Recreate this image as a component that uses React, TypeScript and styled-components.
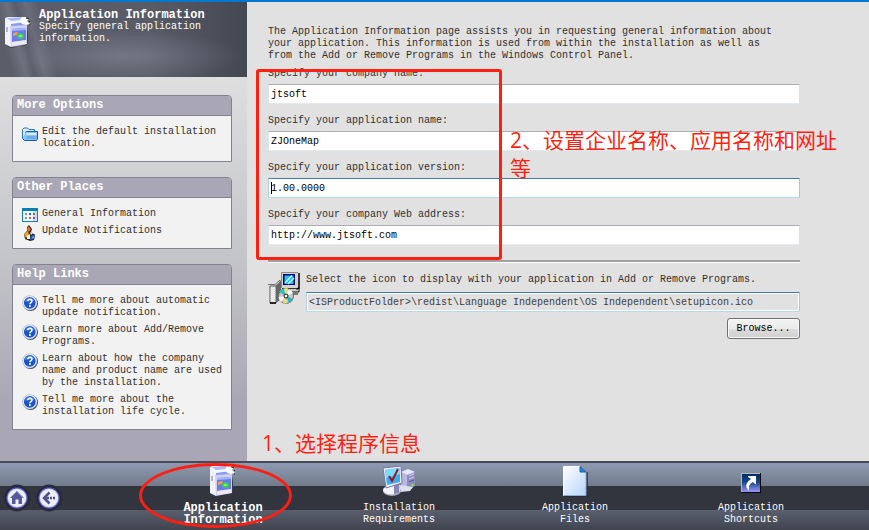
import React from "react";
import styled, { createGlobalStyle, css } from "styled-components";

const RED = "#ff1f12";

const GlobalStyle = createGlobalStyle`
  *, *::before, *::after { box-sizing: border-box; }
  body { margin: 0; background: #e1e1e1; }
  body, button, input {
    font-family: "Liberation Mono", "Noto Sans CJK SC", monospace;
    font-size: 10px;
    line-height: 12px;
  }
`;

const Page = styled.div`
  display: flex;
  flex-direction: column;
  min-height: 100vh;
  border-top: 2px solid #0078d0;
  color: #303030;
`;

const Columns = styled.div`
  display: flex;
  flex: 1;
`;

const Sidebar = styled.aside`
  flex: none;
  width: 247px;
  background: linear-gradient(#dededf 75px, #c4c5c9 255px, #a9a7b5 400px);
`;

const Banner = styled.header`
  display: flex;
  gap: 7px;
  height: 75px;
  padding: 7px 8px 0 4px;
  color: #fff;
  background:
    linear-gradient(75deg, transparent 5%, rgba(190, 196, 215, 0.18) 10%, transparent 13%, rgba(190, 196, 215, 0.16) 17%, transparent 22%),
    radial-gradient(ellipse 120px 26px at 50% 72%, rgba(150, 158, 178, 0.4), transparent),
    linear-gradient(90deg, #5b5d69, #595c67 60%, #444852);

  svg { flex: none; margin-top: 7px; }
`;

const BannerTitle = styled.h1`
  margin: 0;
  font-size: 12px;
  line-height: 12px;
`;

const BannerText = styled.p`
  margin: 0;
`;

const Panels = styled.div`
  display: grid;
  gap: 15px;
  padding: 18px 15px 31px 12px;
`;

const PanelBox = styled.section`
  border: 1px solid #84828f;
  border-radius: 4px 4px 0 0;
  background: #f2f2f2;
  overflow: hidden;
`;

const PanelTitle = styled.h2`
  margin: 0;
  padding: 0 4px;
  font-size: 12px;
  line-height: 19px;
  color: #fff;
  background: #a9a7b5;
  border-bottom: 1px solid #84828f;
`;

const PanelList = styled.ul`
  display: grid;
  gap: 5px;
  margin: 0;
  padding: 10px 6px 11px 9px;
  list-style: none;
`;

const PanelLink = styled.a`
  display: flex;
  gap: 4px;
  color: inherit;
  text-decoration: none;

  svg { flex: none; margin-bottom: -4px; }
`;

const Main = styled.main`
  position: relative;
  flex: 1;
  min-width: 0;
  padding: 24px 69px 40px 21px;
`;

const Intro = styled.p`
  max-width: 510px;
  margin: 0 0 6px;
`;

const Fields = styled.div`
  position: relative;
  display: grid;
  gap: 11px;
  padding-bottom: 15px;
`;

const Field = styled.div`
  position: relative;
  display: grid;
  gap: 4px;
`;

const TextBox = styled.input<{ $look?: "active" | "fixed" }>`
  width: 100%;
  min-width: 0;
  height: 20px;
  padding: 0 2px;
  color: #000;
  background: #fff;
  border: 1px solid;
  border-color: #abadb3 #dbdfe6 #e3e9ef #e2e3ea;
  border-radius: 1px;
  outline: none;

  ${(p) => p.$look && css`border-color: #3d7bad #a4c9e3 #b7d9ed #b5cfe7;`}
  ${(p) => p.$look === "fixed" && css`
    color: #404040;
    background: #e1e1e1;
    box-shadow: inset 0 0 0 1px #fff;
  `}
`;

const Caret = styled.span`
  position: absolute;
  left: 3px;
  bottom: 4px;
  width: 1px;
  height: 12px;
  background: #000;
`;

const Divider = styled.hr`
  height: 3px;
  margin: 0;
  border: 0;
  border-bottom: 1px solid #fff;
  background: #a0a0a0;
`;

const IconRow = styled.div`
  display: flex;
  gap: 6px;
  padding-top: 9px;

  > svg { flex: none; }
`;

const IconField = styled.div`
  display: grid;
  gap: 6px;
  flex: 1;
  min-width: 0;
  padding-top: 2px;
`;

const BrowseButton = styled.button`
  justify-self: end;
  width: 73px;
  height: 21px;
  padding: 0;
  color: #000;
  border: 1px solid #707070;
  border-radius: 3px;
  box-shadow: inset 0 0 0 1px #fbfbfb;
  background: linear-gradient(#f2f2f2, #ebebeb 50%, #dddddd 50%, #cfcfcf);
`;

const Note = styled.p`
  position: absolute;
  margin: 0;
  font-family: "Open Sans", "Noto Sans CJK SC", sans-serif;
  font-size: 21px;
  line-height: 28px;
  color: ${RED};
`;

const FieldsNote = styled(Note)`
  left: 242px;
  top: 58px;
  width: 332px;
`;

const StepNote = styled(Note)`
  left: 15px;
  bottom: 4px;
`;

const FieldsFrame = styled.div`
  position: absolute;
  left: -12px;
  top: 1px;
  width: 246px;
  bottom: 0;
  border: 3px solid ${RED};
  border-radius: 3px;
  pointer-events: none;
`;

const BottomBar = styled.footer`
  display: flex;
  padding: 4px 30px 4px 0;
  color: #fff;
  background: linear-gradient(
    #454b59 2px, #8f9bb3 2px, #717b8b 25px,
    #32353e 25px, #32353e 49px, #5a5f6e 49px, #3f444f 69px
  );
`;

const History = styled.div`
  display: flex;
  gap: 4px;
  flex: none;
  width: 135px;
  padding: 19px 0 0 3px;
`;

const RoundButton = styled.button`
  width: 28px;
  height: 28px;
  padding: 0;
  border: 0;
  background: none;

  svg { display: block; }
`;

const Tabs = styled.nav`
  display: grid;
  grid-template-columns: repeat(4, 1fr);
  flex: 1;
`;

const Tab = styled.button<{ $current?: boolean }>`
  position: relative;
  display: flex;
  flex-direction: column;
  align-items: center;
  gap: 5px;
  padding: 0;
  border: 0;
  background: none;
  color: #fff;
  ${(p) => p.$current && css`
    font-size: 12px;
    font-weight: bold;
  `}
`;

const TabLabel = styled.span`
  width: 80px;
`;

const TabRing = styled.span`
  position: absolute;
  left: calc(50% - 84px);
  top: -2px;
  width: 153px;
  height: 65px;
  border: 3px solid ${RED};
  border-radius: 50%;
`;

const ProductIcon = () => (
  <svg width="28" height="32" viewBox="0 0 28 32" aria-hidden="true">
    <path d="M2 30 7 32 22 29 24 27V11L21 30 7 31Z" fill="#3a3c52" />
    <path d="M1 2 7 8V31L1 28Z" fill="#f1f1f8" />
    <path d="M1 2 4 1H22V9L7 11Z" fill="#f4f5ff" />
    <path d="M3 2 19 1 17 4 7 5Z" fill="#a9b9f5" />
    <path d="M7 8 22 6V9L7 11Z" fill="#8499ee" />
    <path d="M6 10 23 9 23 28 7 31Z" fill="#d0d1f0" />
    <path d="M3 11V16" stroke="#77779a" strokeWidth="1" />
    <path d="M8 13 22 12V24L8 26Z" fill="#6b78ee" />
    <path d="M8 13 22 12V14L8 15Z" fill="#a5b4ff" />
    <path d="M9 17 14 16 13 19 9 20Z" fill="#f2a04a" />
    <ellipse cx="16.500" cy="20" rx="4" ry="3" fill="#3fbf69" />
    <ellipse cx="16.500" cy="20" rx="2" ry="1.300" fill="#7df06a" />
    <path d="M8 26 22 24V28L8 30Z" fill="#ebe8f1" />
    <path d="M16 4 18 1 21 3 25 3 23 5 26 8 22 9 18 8Z" fill="#fff" />
    <path d="M23 2 25 3M26 5 25 6M25 9H26" stroke="#22242f" strokeWidth="1" />
  </svg>
);

const FolderIcon = () => (
  <svg width="16" height="16" viewBox="0 0 16 16" aria-hidden="true">
    <path d="M.5 12.500V3.500L2 2H5.500L7 3.500H12.500V6" fill="#d8efff" stroke="#2473c4" />
    <path d="M3.500 6.500Q3.500 5.500 4.500 5.500H15.500V13L14.500 14.500H2.500L.5 12.500" fill="#8cc3f3" stroke="#1359b0" />
    <path d="M4.500 7H14.500V9.500H4.500Z" fill="#d3ebff" />
    <path d="M4.500 9.500H14.500V13H4.500Z" fill="#70aee9" />
  </svg>
);

const CalendarIcon = () => (
  <svg width="16" height="16" viewBox="0 0 16 16" shapeRendering="crispEdges" aria-hidden="true">
    <rect width="16" height="14" fill="#0880b0" />
    <rect x="1" y="3" width="14" height="10" fill="#f5f3ff" />
    <rect x="11" y="3" width="4" height="10" fill="#d9d4f4" />
    <path d="M3 5h2v2h-2zM3 9h2v2h-2z" fill="#8b8a94" />
    <path d="M7 5h2v2h-2z" fill="#087ba8" />
    <path d="M11 5h2v2h-2z" fill="#21a84d" />
    <path d="M7 9h2v2h-2z" fill="#ca6730" />
    <path d="M11 9h2v2h-2z" fill="#6661b7" />
  </svg>
);

const UpdateIcon = () => (
  <svg width="16" height="16" viewBox="0 0 16 16" aria-hidden="true">
    <path d="M7 0 10 4 9 7 13 10 12 15 8 16 3 14 2 9 5 6 5 2Z" fill="#22242e" />
    <path d="M6 1 9 4 7 7 5 5Z" fill="#ec6d1c" />
    <path d="M2 9 6 6 7 10 4 13Z" fill="#f6a51e" />
    <path d="M8 7 11 8 9 10Z" fill="#f7f7fa" />
    <path d="M5 11 8 9 8 14 5 14Z" fill="#fff" />
    <path d="M9 11 13 9 12 14 8 15Z" fill="#2b5caf" />
    <path d="M10 12 12 11 11 14Z" fill="#8db8ee" />
    <path d="M3 13 5 15 4 15Z" fill="#d6571e" />
  </svg>
);

const HelpIcon = () => (
  <svg width="16" height="16" viewBox="0 0 16 16" aria-hidden="true">
    <circle cx="8.500" cy="8.500" r="7.500" fill="#414560" />
    <circle cx="7.700" cy="7.700" r="7.500" fill="#b5bfd6" />
    <circle cx="7.800" cy="7.800" r="6.800" fill="#f0f4fb" />
    <circle cx="7.800" cy="7.800" r="5.900" fill="#1c55cb" />
    <path d="M3 7A5 5 0 0 1 12.500 6Q8 5 3 7Z" fill="#4f83e6" />
    <path d="M5.800 6.200Q5.900 4.300 7.900 4.300Q10 4.400 10 6.100Q9.900 7.200 8.700 7.800Q7.900 8.300 7.900 9.200" fill="none" stroke="#fff" strokeWidth="1.500" />
    <rect x="7" y="10.200" width="1.800" height="1.700" fill="#fff" />
  </svg>
);

const SetupIcon = () => (
  <svg width="32" height="32" viewBox="0 0 32 32" aria-hidden="true">
    <path d="M14 0H30V17H14Z" fill="#d6d4cc" />
    <path d="M13.500 16V.5H30" fill="none" stroke="#8a8a8a" />
    <path d="M31 1V16L29 17H14" fill="none" stroke="#000" strokeWidth="1.500" />
    <path d="M15 2H27V13H15Z" fill="#000080" />
    <path d="M16.500 3.500H25.500V12H16.500Z" fill="#25bdea" />
    <path d="M17 11 24 3.500M20 12 26 6" stroke="#b9f3ff" strokeWidth="1.500" />
    <path d="M17 17H28L31 20H20Z" fill="#c9c9c9" />
    <path d="M22 20H31V16M24 22H30" stroke="#111" strokeWidth="1" fill="none" />
    <path d="M0 12.500H7L12 8V13" fill="#e5e5e5" stroke="#6e6e6e" />
    <path d="M2 14H8V31H2Z" fill="#f4f4f4" stroke="#555" strokeWidth="1" />
    <path d="M3 17V30M5 15V30M7 17V30" stroke="#d0d0d0" strokeDasharray="1 1" />
    <path d="M8 13 13 9V27L8 31Z" fill="#676767" />
    <path d="M2 31H8" stroke="#000" strokeWidth="1.500" />
    <circle cx="18" cy="24" r="7.500" fill="#c8c8c8" stroke="#6b6b6b" />
    <path d="M18 24 11 20A8 8 0 0 1 16 16.500Z" fill="#32bfc2" />
    <path d="M18 24 16 16.500A8 8 0 0 1 20 16.500Z" fill="#eee66d" />
    <path d="M18 24 21 17A8 8 0 0 1 25 21Z" fill="#f7f7f7" />
    <path d="M18 24 25 27A8 8 0 0 1 21 31Z" fill="#29b5bd" />
    <path d="M18 24 19 31.500A8 8 0 0 1 15 31Z" fill="#e9de68" />
    <path d="M18 24 13 30A8 8 0 0 1 10.500 25Z" fill="#f5f5f5" />
    <circle cx="18" cy="24" r="2" fill="#fff" stroke="#111" />
  </svg>
);

const RequirementsIcon = () => (
  <svg width="34" height="32" viewBox="0 0 34 32" aria-hidden="true">
    <path d="M19 7 26 4 33 7V21L26 25 19 21Z" fill="#8e8cc0" />
    <path d="M19 7 26 4 33 7 25 10Z" fill="#e8e7fa" />
    <path d="M19 7 25 10V25L19 22Z" fill="#b9b8e2" />
    <path d="M27 11 32 9M27 14 32 12" stroke="#d9d8f4" />
    <path d="M27 17 32 15" stroke="#56548a" />
    <circle cx="30.500" cy="20" r="1.200" fill="#77ed35" />
    <path d="M12 19 18 18V26L12 27Z" fill="#9391c6" />
    <path d="M17 20 31 22 28 26 18 27Z" fill="#dedff0" />
    <ellipse cx="10" cy="26" rx="9" ry="5" fill="#a5a5bd" />
    <ellipse cx="9.500" cy="25" rx="8.500" ry="4.500" fill="#f4f4fb" />
    <path d="M12 20 17 19V28L12 29Z" fill="#8785b9" />
    <path d="M1 3 19 1 20 18 4 23Z" fill="#ececff" stroke="#7775a9" />
    <path d="M3 5 18 3V17L5 20Z" fill="#35aef2" />
    <path d="M3 5 18 3V9L4 13Z" fill="#79ddff" />
    <path d="M7 11 10 16 16 4" fill="none" stroke="#9e1824" strokeWidth="2" />
  </svg>
);

const FilesIcon = () => (
  <svg width="26" height="32" viewBox="0 0 26 32" aria-hidden="true">
    <defs>
      <linearGradient id="sheet" x1="0" y1="0" x2="1" y2="1">
        <stop offset="0" stopColor="#fff" />
        <stop offset="0.350" stopColor="#e4f0ff" />
        <stop offset="1" stopColor="#b9d5fa" />
      </linearGradient>
    </defs>
    <path d="M2 31.500H25V7" fill="none" stroke="#252b3a" strokeWidth="1.500" />
    <path d="M1.500 1.500H18.500L24 7V30.500H1.500Z" fill="url(#sheet)" stroke="#8ba9d9" />
    <path d="M1.500 30.500V1.500H18" fill="none" stroke="#fff" />
    <path d="M18 1.500 24 7H18Z" fill="#1689dc" stroke="#255c9c" />
  </svg>
);

const ShortcutIcon = () => (
  <svg width="20" height="32" viewBox="0 0 20 32" aria-hidden="true">
    <defs>
      <linearGradient id="dusk" x1="0" y1="0" x2="0" y2="1">
        <stop offset="0" stopColor="#002c60" />
        <stop offset="0.450" stopColor="#1a4587" />
        <stop offset="1" stopColor="#9c98ff" />
      </linearGradient>
    </defs>
    <rect y="8" width="20" height="20" fill="#05070c" />
    <rect y="8" width="19" height="19" fill="#b8b8b8" />
    <rect x="1" y="9" width="18" height="18" fill="url(#dusk)" />
    <path d="M7 11H15V19H14L12 17Q9 18 8 21V25H7Q4 21 6 18 7 16 10 14L7 12Z" fill="#fff" />
  </svg>
);

const Disc = ({ children }: { children: React.ReactNode }) => (
  <svg width="28" height="28" viewBox="0 0 28 28" aria-hidden="true">
    <circle cx="14" cy="14" r="13.500" fill="#2d3039" />
    <circle cx="14" cy="14" r="11.500" fill="#0d0f20" />
    <circle cx="14" cy="14" r="11" fill="#4547a0" />
    <circle cx="14" cy="14" r="9.800" fill="#a9aae0" />
    <circle cx="14" cy="14" r="9" fill="#eeeef3" />
    {children}
  </svg>
);

const HomeGlyph = () => (
  <>
    <path d="M14 7 21 14H19V20H15.500V15.500H12.500V20H9V14H7Z" fill="#55589c" />
    <path d="M14 8 20 14" stroke="#8386c2" />
  </>
);

const BackGlyph = () => (
  <>
    <path d="M14.500 8.500 9 14 14.500 19.500" fill="none" stroke="#4c4f8c" strokeWidth="2.500" />
    <path d="M11 14H14M15 14H17M18 14H20" stroke="#4c4f8c" strokeWidth="2.500" />
  </>
);

const panels = [
  { title: "More Options", links: [["Edit the default installation location.", FolderIcon]] },
  {
    title: "Other Places",
    links: [["General Information", CalendarIcon], ["Update Notifications", UpdateIcon]],
  },
  {
    title: "Help Links",
    links: [
      ["Tell me more about automatic update notification.", HelpIcon],
      ["Learn more about Add/Remove Programs.", HelpIcon],
      ["Learn about how the company name and product name are used by the installation.", HelpIcon],
      ["Tell me more about the installation life cycle.", HelpIcon],
    ],
  },
] as { title: string; links: [string, React.ComponentType][] }[];

const fields = [
  { id: "company", label: "Specify your company name:", value: "jtsoft" },
  { id: "application", label: "Specify your application name:", value: "ZJOneMap" },
  { id: "version", label: "Specify your application version:", value: "1.00.0000", active: true },
  { id: "address", label: "Specify your company Web address:", value: "http://www.jtsoft.com" },
];

const tabs = [
  { label: "Application Information", Icon: ProductIcon, current: true },
  { label: "Installation Requirements", Icon: RequirementsIcon },
  { label: "Application Files", Icon: FilesIcon },
  { label: "Application Shortcuts", Icon: ShortcutIcon },
];

export default function App() {
  return (
    <>
      <GlobalStyle />
      <Page>
        <Columns>
          <Sidebar>
            <Banner>
              <ProductIcon />
              <div>
                <BannerTitle>Application Information</BannerTitle>
                <BannerText>Specify general application information.</BannerText>
              </div>
            </Banner>
            <Panels>
              {panels.map(({ title, links }) => (
                <PanelBox key={title}>
                  <PanelTitle>{title}</PanelTitle>
                  <PanelList>
                    {links.map(([text, Icon]) => (
                      <li key={text}>
                        <PanelLink href="#">
                          <Icon />
                          <span>{text}</span>
                        </PanelLink>
                      </li>
                    ))}
                  </PanelList>
                </PanelBox>
              ))}
            </Panels>
          </Sidebar>
          <Main>
            <Intro>
              The Application Information page assists you in requesting general information about
              your application. This information is used from within the installation as well as
              from the Add or Remove Programs in the Windows Control Panel.
            </Intro>
            <Fields>
              {fields.map(({ id, label, value, active }) => (
                <Field key={id}>
                  <label htmlFor={id}>{label}</label>
                  <TextBox id={id} defaultValue={value} $look={active ? "active" : undefined} />
                  {active && <Caret />}
                </Field>
              ))}
              <FieldsFrame />
              <FieldsNote>2、设置企业名称、应用名称和网址等</FieldsNote>
            </Fields>
            <Divider />
            <IconRow>
              <SetupIcon />
              <IconField>
                <label htmlFor="icon">
                  Select the icon to display with your application in Add or Remove Programs.
                </label>
                <TextBox
                  id="icon"
                  readOnly
                  $look="fixed"
                  value={"<ISProductFolder>\\redist\\Language Independent\\OS Independent\\setupicon.ico"}
                />
                <BrowseButton type="button">Browse...</BrowseButton>
              </IconField>
            </IconRow>
            <StepNote>1、选择程序信息</StepNote>
          </Main>
        </Columns>
        <BottomBar>
          <History>
            <RoundButton type="button" aria-label="Home">
              <Disc><HomeGlyph /></Disc>
            </RoundButton>
            <RoundButton type="button" aria-label="Back">
              <Disc><BackGlyph /></Disc>
            </RoundButton>
          </History>
          <Tabs>
            {tabs.map(({ label, Icon, current }) => (
              <Tab key={label} type="button" $current={current}>
                <Icon />
                <TabLabel>{label}</TabLabel>
                {current && <TabRing />}
              </Tab>
            ))}
          </Tabs>
        </BottomBar>
      </Page>
    </>
  );
}
